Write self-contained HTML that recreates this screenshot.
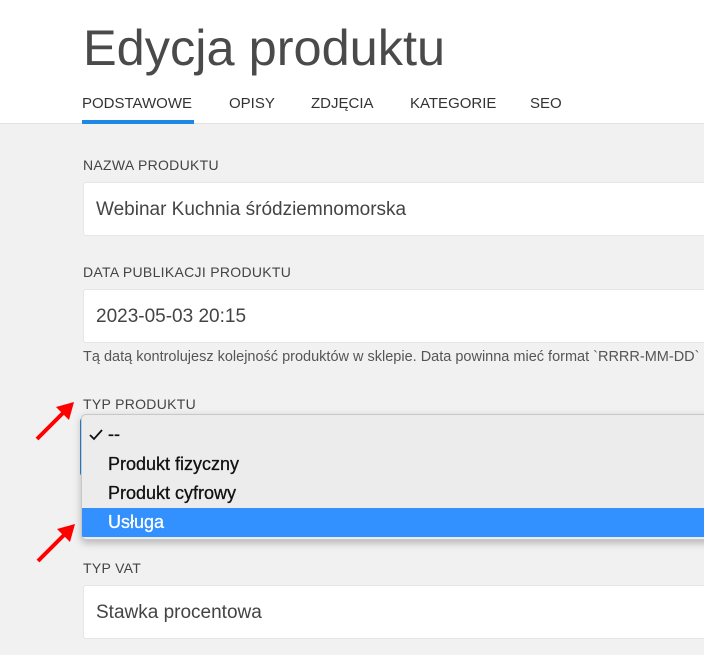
<!DOCTYPE html>
<html><head><meta charset="utf-8"><style>
*{margin:0;padding:0;box-sizing:border-box}
body{width:704px;height:655px;overflow:hidden;background:#f1f1f1;font-family:"Liberation Sans",sans-serif;position:relative;color:#333}
.hdr{position:absolute;left:0;top:0;width:704px;height:124px;background:#fff;border-bottom:1px solid #e2e2e2}
h1{position:absolute;left:83px;top:18px;font-weight:normal;font-size:50.5px;color:#4a4a4a;white-space:nowrap}
.tab{position:absolute;top:95px;font-size:15px;color:#333;white-space:nowrap}
.ul{position:absolute;left:82px;top:120px;width:112px;height:4px;background:#1e88e5}
.lbl{position:absolute;left:83px;font-size:14px;color:#444;letter-spacing:0.3px;white-space:nowrap}
.inp{position:absolute;left:83px;width:640px;height:54px;background:#fff;border:1px solid #e6e6e6;border-radius:3px;font-size:19px;color:#444;padding:16px 0 0 12px;white-space:nowrap}
.help{position:absolute;left:83px;top:349px;font-size:14.5px;color:#555;white-space:nowrap}
.sel{position:absolute;left:80px;top:418px;width:630px;height:58px;background:#fff;border-left:3px solid #1e88e5;border-radius:3px}
.dd{position:absolute;left:81px;top:414px;width:640px;height:126px;background:#ececec;border:1px solid #c8c8c8;border-radius:5px;box-shadow:0 3px 8px rgba(0,0,0,.25);overflow:hidden}
.opt{position:absolute;left:0;width:100%;height:29px;font-size:18px;color:#111;padding:4px 0 0 26px;white-space:nowrap;-webkit-text-stroke:0.3px #111}
.hl{background:#3390ff;color:#fff;-webkit-text-stroke:0.3px #fff}
</style></head><body>
<div class="hdr"></div>
<h1>Edycja produktu</h1>
<div class="tab" style="left:82px">PODSTAWOWE</div>
<div class="tab" style="left:229px">OPISY</div>
<div class="tab" style="left:311px">ZDJĘCIA</div>
<div class="tab" style="left:410px">KATEGORIE</div>
<div class="tab" style="left:530px">SEO</div>
<div class="ul"></div>

<div class="lbl" style="top:157px">NAZWA PRODUKTU</div>
<div class="inp" style="top:182px">Webinar Kuchnia śródziemnomorska</div>
<div class="lbl" style="top:264px">DATA PUBLIKACJI PRODUKTU</div>
<div class="inp" style="top:289px">2023-05-03 20:15</div>
<div class="help">Tą datą kontrolujesz kolejność produktów w sklepie. Data powinna mieć format `RRRR-MM-DD`</div>

<div class="lbl" style="top:396px">TYP PRODUKTU</div>
<div class="sel"></div>
<div class="dd">
 <div class="opt" style="top:5px">--</div>
 <svg style="position:absolute;left:7px;top:14px" width="14" height="12"><path d="M1 6 L5 10 L13 1" stroke="#111" stroke-width="1.8" fill="none"/></svg>
 <div class="opt" style="top:35px">Produkt fizyczny</div>
 <div class="opt" style="top:64px">Produkt cyfrowy</div>
 <div class="opt hl" style="top:93px">Usługa</div>
</div>

<div class="lbl" style="top:560px">TYP VAT</div>
<div class="inp" style="top:585px">Stawka procentowa</div>

<svg style="position:absolute;left:0;top:0" width="704" height="655">
 <line x1="37" y1="439" x2="66" y2="410" stroke="#f00" stroke-width="4"/>
 <polygon points="74,402 56,407 69,420" fill="#f00"/>
 <line x1="38" y1="561" x2="67" y2="532" stroke="#f00" stroke-width="4"/>
 <polygon points="75,524 57,529 70,542" fill="#f00"/>
</svg>
</body></html>
